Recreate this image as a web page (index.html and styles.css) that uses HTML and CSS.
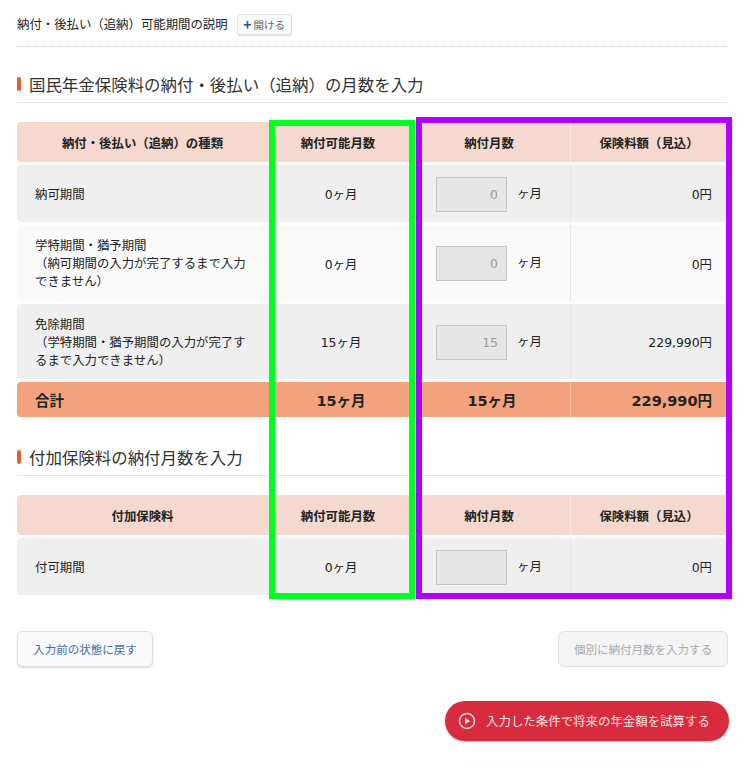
FILE: index.html
```html
<!DOCTYPE html>
<html lang="ja">
  <head>
    <meta charset="UTF-8" />
    <meta name="viewport" content="width=device-width, initial-scale=1.0" />
    <title>納付月数の入力</title>
    <link rel="stylesheet" href="styles.css">
  </head>
  <body>
    <div class="explain">
      <span>納付・後払い（追納）可能期間の説明</span>
      <button class="open-btn"><span class="plus">+</span>開ける</button>
    </div>

    <h2 class="section-title">国民年金保険料の納付・後払い（追納）の月数を入力</h2>
    <table class="months">
      <tr class="head">
        <th>納付・後払い（追納）の種類</th>
        <th>納付可能月数</th>
        <th>納付月数</th>
        <th class="sep">保険料額（見込）</th>
      </tr>
      <tr class="row-a">
        <td class="label">納可期間</td>
        <td class="center">0ヶ月</td>
        <td class="entry"><input value="0" disabled><span>ヶ月</span></td>
        <td class="sep amount">0円</td>
      </tr>
      <tr class="row-b">
        <td class="label">学特期間・猶予期間<br>（納可期間の入力が完了するまで入力できません）</td>
        <td class="center">0ヶ月</td>
        <td class="entry"><input value="0" disabled><span>ヶ月</span></td>
        <td class="sep amount">0円</td>
      </tr>
      <tr class="row-a">
        <td class="label">免除期間<br>（学特期間・猶予期間の入力が完了するまで入力できません）</td>
        <td class="center">15ヶ月</td>
        <td class="entry"><input value="15" disabled><span>ヶ月</span></td>
        <td class="sep amount">229,990円</td>
      </tr>
      <tr class="total">
        <td class="label">合計</td>
        <td class="center">15ヶ月</td>
        <td class="center">15ヶ月</td>
        <td class="sep amount">229,990円</td>
      </tr>
    </table>

    <h2 class="section-title">付加保険料の納付月数を入力</h2>
    <table class="months">
      <tr class="head">
        <th>付加保険料</th>
        <th>納付可能月数</th>
        <th>納付月数</th>
        <th class="sep">保険料額（見込）</th>
      </tr>
      <tr class="row-a">
        <td class="label">付可期間</td>
        <td class="center">0ヶ月</td>
        <td class="entry"><input disabled><span>ヶ月</span></td>
        <td class="sep amount">0円</td>
      </tr>
    </table>

    <div class="actions">
      <button class="btn">入力前の状態に戻す</button>
      <button class="btn off">個別に納付月数を入力する</button>
    </div>
    <div class="submit">
      <button class="go">
        <svg width="18" height="18" viewBox="0 0 18 18">
          <circle cx="9" cy="9" r="7.5" fill="none" stroke="#f7d5d8" stroke-width="1.5" />
          <path d="M7 5.5 L12 9 L7 12.5 Z" fill="#f7d5d8" />
        </svg>
        入力した条件で将来の年金額を試算する
      </button>
    </div>

    <div class="frame green"></div>
    <div class="frame purple"></div>
  </body>
</html>
```

FILE: styles.css
```css
* {
  box-sizing: border-box;
}
body {
  position: relative;
  width: 750px;
  height: 774px;
  margin: 0;
  padding: 0 23px 0 17px;
  font-family: "Noto Sans CJK JP", sans-serif;
  font-size: 12.4px;
  color: #222;
  background-color: #fff;
  overflow: hidden;
}
.explain {
  display: flex;
  align-items: center;
  gap: 9px;
  height: 47px;
  padding-top: 2px;
  border-bottom: 1px dotted #c8c8c8;
}
.open-btn {
  display: flex;
  align-items: center;
  justify-content: center;
  width: 55px;
  height: 21px;
  padding: 0;
  font-family: inherit;
  font-size: 10.5px;
  color: #666;
  background-color: #f8f9fa;
  border: 1px solid #e2e2e2;
  border-radius: 3px;
  box-shadow: 0 1px 1px #ddd;
}
.plus {
  margin-right: 2px;
  font-size: 14px;
  font-weight: bold;
  line-height: 1;
  color: #2a5a96;
}
.section-title {
  position: relative;
  height: 40px;
  margin: 16px 0 0 0;
  padding: 9px 0 0 12px;
  font-size: 16.45px;
  font-weight: normal;
  line-height: 24px;
  color: #333;
  border-bottom: 1px solid #e6e6e6;
}
.section-title::before {
  content: "";
  position: absolute;
  left: 0;
  top: 14px;
  width: 4px;
  height: 14px;
  background-color: #e0622b;
  border-radius: 2px;
}
.months {
  width: 710px;
  margin-top: 16px;
  table-layout: fixed;
  border-collapse: separate;
  border-spacing: 0 3px;
}
.months th,
.months td {
  padding: 0;
}
.months th:nth-child(1) {
  width: 251px;
}
.months th:nth-child(2) {
  width: 140px;
}
.months th:nth-child(3) {
  width: 162px;
}
.months tr > :first-child {
  border-radius: 4px 0 0 4px;
}
.months .head th {
  height: 40px;
  padding-top: 2px;
  font-size: 12.4px;
  font-weight: bold;
  background-color: #f5d9ce;
}
.row-a td {
  height: 57px;
  padding-top: 1px;
  background-color: #efefef;
}
.row-b td {
  height: 76px;
  padding-top: 1px;
  background-color: #fafafa;
}
.months tr:nth-child(4) td {
  height: 75px;
}
.total td {
  height: 35px;
  font-size: 14.5px;
  font-weight: bold;
  background-color: #f2a27c;
}
.months .label {
  padding: 0 18px;
  line-height: 18px;
}
.months .center {
  padding-left: 6px;
  font-family: "DejaVu Sans", "Noto Sans CJK JP", sans-serif;
  text-align: center;
}
.months .entry {
  padding-left: 28px;
}
.entry input {
  width: 71px;
  height: 35px;
  margin-right: 10px;
  padding: 0 8px;
  font-family: "DejaVu Sans", sans-serif;
  font-size: 12.4px;
  color: #999;
  text-align: right;
  vertical-align: middle;
  background-color: #e6e6e6;
  border: 1px solid #c4c4c4;
}
.sep {
  border-left: 1px solid #e6e6e6;
}
.head .sep {
  border-left-color: #f9e8df;
}
.total .sep {
  border-left-color: #f7c0a5;
}
.months .amount {
  padding-right: 15px;
  font-family: "DejaVu Sans", "Noto Sans CJK JP", sans-serif;
  text-align: right;
}
.actions {
  display: flex;
  justify-content: space-between;
  margin-top: 33px;
}
.btn {
  width: 136px;
  height: 36px;
  padding: 0;
  font-family: inherit;
  font-size: 11.5px;
  color: #4a6aa5;
  background-color: #f9fafb;
  border: 1px solid #e0e0e0;
  border-radius: 6px;
  box-shadow: 0 1px 2px #d8d8d8;
}
.off {
  width: 170px;
  margin-right: -1px;
  color: #aaa;
  background-color: #f4f4f4;
  box-shadow: none;
}
.submit {
  display: flex;
  justify-content: flex-end;
  margin-top: 34px;
}
.go {
  display: flex;
  align-items: center;
  justify-content: center;
  gap: 10px;
  width: 284px;
  height: 40px;
  margin-right: -2px;
  padding: 0 6px 0 0;
  font-family: inherit;
  font-size: 12.45px;
  color: #fbe3e5;
  background-color: #d62c3e;
  border: none;
  border-radius: 20px;
  box-shadow: 0 1px 2px #e8b8bd;
}
.frame {
  position: absolute;
  border-style: solid;
  border-width: 6px;
}
.green {
  left: 269px;
  top: 120px;
  width: 146px;
  height: 479px;
  border-color: #0f2;
}
.purple {
  left: 416px;
  top: 117px;
  width: 316px;
  height: 482px;
  border-color: #b000ff;
}
```
